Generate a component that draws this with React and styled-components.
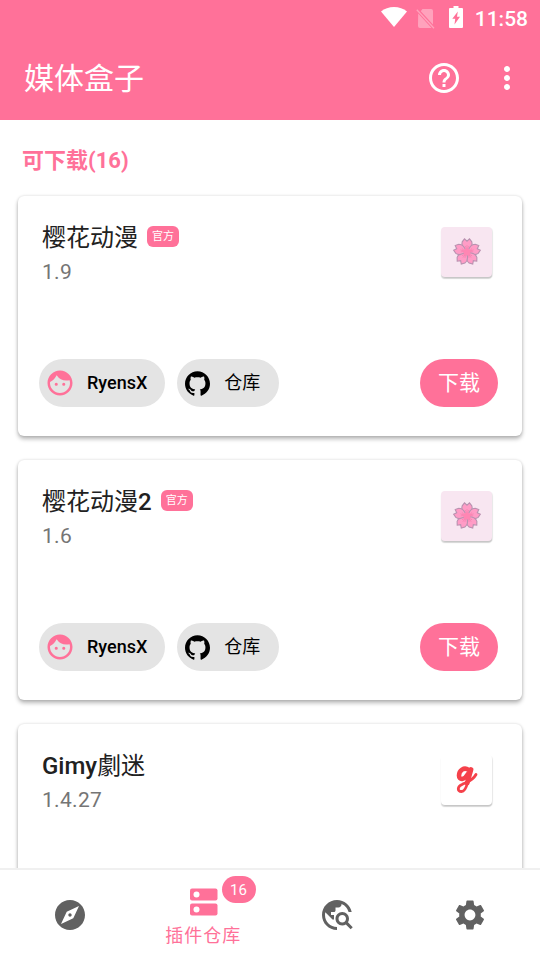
import React from 'react';
import styled, { createGlobalStyle } from 'styled-components';
import {
    MdHelpOutline,
    MdMoreVert,
    MdFace,
    MdExplore,
    MdTravelExplore,
    MdSettings,
} from 'react-icons/md';
import { SiGithub } from 'react-icons/si';

const PINK = '#ff7199';

const plugins = [
    { name: '樱花动漫', version: '1.9', official: true, icon: 'sakura', author: 'RyensX' },
    { name: '樱花动漫', suffix: '2', version: '1.6', official: true, icon: 'sakura', author: 'RyensX' },
    { prefix: 'Gimy', name: '劇迷', version: '1.4.27', official: false, icon: 'gimy', author: 'RyensX' },
];

const WifiIcon = () => (
    <svg width="26" height="20" viewBox="0 0 26 20">
        <path d="M0 4.600C3.500 1.500 8 0 13 0s9.500 1.500 13 4.600L13 20z" fill="#fff" />
    </svg>
);

const NoSimIcon = () => (
    <svg width="19" height="21" viewBox="0 0 19 21">
        <path d="M6.500 1H15a2 2 0 0 1 2 2v13.600L4.800 3.200zM2.200 5.500 15.500 20H4a2 2 0 0 1-2-2z" fill="#fff" />
        <path d="M.8 1.800 18 20.200" stroke="#fff" strokeWidth="1.300" />
    </svg>
);

const BatteryIcon = () => (
    <svg width="14" height="22" viewBox="0 0 14 22">
        <path
            fillRule="evenodd"
            fill="#fff"
            d="M4.500 0h5v2H13a1 1 0 0 1 1 1v18a1 1 0 0 1-1 1H1a1 1 0 0 1-1-1V3a1 1 0 0 1 1-1h3.500zM8.800 5.500 3.300 12.800H6.200L5.500 18.500 11 10.800H8z"
        />
    </svg>
);

const StoreIcon = () => (
    <svg width="36" height="36" viewBox="0 0 36 36">
        <rect x="5" y="5.500" width="27.500" height="12" rx="2" fill={PINK} />
        <rect x="5" y="20.500" width="27.500" height="12" rx="2" fill={PINK} />
        <circle cx="11.500" cy="11.500" r="3" fill="#fff" />
        <circle cx="11.500" cy="26.500" r="3" fill="#fff" />
    </svg>
);

const SakuraIcon = () => (
    <svg width="30" height="30" viewBox="-15 -15 30 30">
        {[0, 72, 144, 216, 288].map((deg) => (
            <g key={deg} transform={`rotate(${deg})`}>
                <path
                    d="M0-1C-4-3.500-5.800-7-4.800-10.200L-2.500-13.200 0-10.800 2.500-13.200 4.800-10.200C5.800-7 4-3.500 0-1z"
                    fill="#ff9cc6"
                    stroke="#b992b0"
                    strokeWidth="1.100"
                />
                <path d="M0-1V-7M0-2l-1.800-4M0-2l1.800-4" stroke="#f77fae" strokeWidth=".7" />
            </g>
        ))}
        <circle r="3.500" fill="#ff86b3" />
    </svg>
);

const GimyIcon = () => (
    <svg width="24" height="30" viewBox="0 0 24 30" fill="none" stroke="#f5414a" strokeLinecap="round" strokeLinejoin="round">
        <path d="M13.500 4.800C9 1.500 4 5.500 4 10.500c0 5 5.500 4.500 8.500-1" strokeWidth="4.600" />
        <path d="M16 4.500 12.200 18" strokeWidth="4.800" />
        <path d="M12.500 17.500C11 24 9 26.500 6.500 26.500c-4.500 0-4.200-5 .5-7C12 17 17.500 16 21 9.500" strokeWidth="2.800" />
    </svg>
);

const tabs = [
    { id: 'explore', Icon: MdExplore },
    { id: 'store', Icon: StoreIcon, label: '插件仓库', badge: 16 },
    { id: 'search', Icon: MdTravelExplore },
    { id: 'settings', Icon: MdSettings },
];

const PluginCard = ({ plugin }) => (
    <Card>
        <CardTop>
            <div>
                <NameRow>
                    <Name>
                        {plugin.prefix}
                        <Han>{plugin.name}</Han>
                        {plugin.suffix}
                    </Name>
                    {plugin.official && <Official>官方</Official>}
                </NameRow>
                <Version>{plugin.version}</Version>
            </div>
            <Thumb $plain={plugin.icon === 'gimy'}>
                {plugin.icon === 'gimy' ? <GimyIcon /> : <SakuraIcon />}
            </Thumb>
        </CardTop>
        <CardActions>
            <Chip>
                <MdFace size={30} color={PINK} />
                <span>{plugin.author}</span>
            </Chip>
            <Chip $repo>
                <SiGithub size={25} />
                <span>仓库</span>
            </Chip>
            <Download>下载</Download>
        </CardActions>
    </Card>
);

const App = () => (
    <Screen>
        <GlobalStyle />
        <Header>
            <StatusBar>
                <WifiIcon />
                <Faded>
                    <NoSimIcon />
                </Faded>
                <BatteryIcon />
                <Clock>11:58</Clock>
            </StatusBar>
            <Toolbar>
                <Title>媒体盒子</Title>
                <MdHelpOutline size={36} />
                <MdMoreVert size={36} />
            </Toolbar>
        </Header>
        <Content>
            <SectionTitle>可下载(16)</SectionTitle>
            {plugins.map((plugin, index) => (
                <PluginCard key={index} plugin={plugin} />
            ))}
        </Content>
        <BottomNav>
            {tabs.map(({ id, Icon, label, badge }) => (
                <Tab key={id} $active={!!label}>
                    <Icon size={36} />
                    {label && <TabLabel>{label}</TabLabel>}
                    {badge && <Badge>{badge}</Badge>}
                </Tab>
            ))}
        </BottomNav>
    </Screen>
);

const GlobalStyle = createGlobalStyle`
    * { box-sizing: border-box; }
    body {
        margin: 0;
        overflow: hidden;
        font-family: Roboto, 'Noto Sans CJK SC', sans-serif;
    }
    svg { flex-shrink: 0; }
`;

const Screen = styled.div`
    width: 540px;
    height: 960px;
    display: flex;
    flex-direction: column;
    background: #fff;
    overflow: hidden;
`;

const Header = styled.header`
    height: 120px;
    flex-shrink: 0;
    background: ${PINK};
    color: #fff;
`;

const StatusBar = styled.div`
    height: 36px;
    display: flex;
    align-items: center;
    justify-content: flex-end;
    padding: 0 12px 2px 0;
`;

const Faded = styled.span`
    display: flex;
    opacity: 0.35;
    margin: 2px 14px 0 9px;
`;

const Clock = styled.span`
    font-size: 21px;
    font-weight: 500;
    line-height: 36px;
    margin-left: 12px;
    padding-top: 4px;
`;

const Toolbar = styled.div`
    height: 84px;
    display: flex;
    align-items: center;
    padding: 0 15px 0 24px;
    gap: 27px;
`;

const Title = styled.h1`
    flex: 1;
    margin: 0;
    padding-top: 2px;
    font-size: 30px;
    font-weight: 400;
    line-height: 40px;
`;

const Content = styled.main`
    flex: 1;
    min-height: 0;
    overflow-y: auto;
    scrollbar-width: none;
    padding: 0 18px;
`;

const SectionTitle = styled.h2`
    margin: 0;
    padding: 3px 4px 0;
    height: 76px;
    line-height: 76px;
    font-size: 22px;
    font-weight: 700;
    color: ${PINK};
`;

const Card = styled.section`
    height: 240px;
    margin-bottom: 24px;
    padding: 24px 24px 29px 21px;
    display: flex;
    flex-direction: column;
    justify-content: space-between;
    background: #fff;
    border-radius: 6px;
    box-shadow: 0 3px 4px rgba(0, 0, 0, 0.28), 0 0 3px rgba(0, 0, 0, 0.14);
`;

const CardTop = styled.div`
    display: flex;
    justify-content: space-between;
    padding: 0 6px 0 3px;
`;

const NameRow = styled.div`
    display: flex;
    align-items: center;
    height: 34px;
`;

const Name = styled.h3`
    margin: 0;
    padding-top: 2px;
    font-size: 24px;
    font-weight: 500;
    line-height: 34px;
    color: #212121;
`;

const Han = styled.span`
    font-weight: 400;
`;

const Official = styled.span`
    margin: 0 0 1px 9px;
    width: 32px;
    height: 21px;
    line-height: 21px;
    text-align: center;
    font-size: 11px;
    color: #fff;
    background: ${PINK};
    border-radius: 6px;
`;

const Version = styled.div`
    padding-top: 1px;
    font-size: 21px;
    line-height: 34px;
    letter-spacing: 0.3px;
    color: #757575;
`;

const Thumb = styled.div`
    width: 51px;
    height: 50px;
    margin-top: 7px;
    display: flex;
    align-items: center;
    justify-content: center;
    border-radius: 4px;
    background: ${(props) => (props.$plain ? '#fff' : '#f8e6f1')};
    box-shadow: 0 2px 1px rgba(0, 0, 0, 0.16), 1px 1px 1px rgba(0, 0, 0, 0.08);
`;

const CardActions = styled.div`
    display: flex;
    align-items: center;
    gap: 12px;
`;

const Chip = styled.div`
    height: 48px;
    display: flex;
    align-items: center;
    gap: ${(props) => (props.$repo ? '14px' : '12px')};
    padding: ${(props) => (props.$repo ? '0 19px 0 8px' : '0 18px 0 6px')};
    font-size: 18px;
    font-weight: ${(props) => (props.$repo ? 400 : 500)};
    color: #000;
    background: #e4e4e4;
    border-radius: 24px;

    span {
        padding-bottom: ${(props) => (props.$repo ? '4px' : '2px')};
    }
`;

const Download = styled.button`
    margin-left: auto;
    width: 78px;
    height: 48px;
    padding: 0 0 4px;
    border: none;
    border-radius: 24px;
    font-family: inherit;
    font-size: 21px;
    color: #fff;
    background: ${PINK};
`;

const BottomNav = styled.nav`
    height: 92px;
    flex-shrink: 0;
    display: flex;
    padding: 0 3px;
    border-top: 2px solid #f0f0f0;
    background: #fff;
`;

const Tab = styled.div`
    position: relative;
    flex: 1;
    display: flex;
    flex-direction: column;
    align-items: center;
    justify-content: center;
    color: ${(props) => (props.$active ? PINK : '#616161')};
`;

const TabLabel = styled.span`
    padding-top: 5px;
    font-size: 18px;
    line-height: 23px;
    letter-spacing: 1px;
`;

const Badge = styled.span`
    position: absolute;
    top: 6px;
    left: 85px;
    width: 34px;
    height: 27px;
    line-height: 28px;
    text-align: center;
    font-size: 15px;
    color: #fff;
    background: ${PINK};
    border-radius: 14px;
`;

export default App;
